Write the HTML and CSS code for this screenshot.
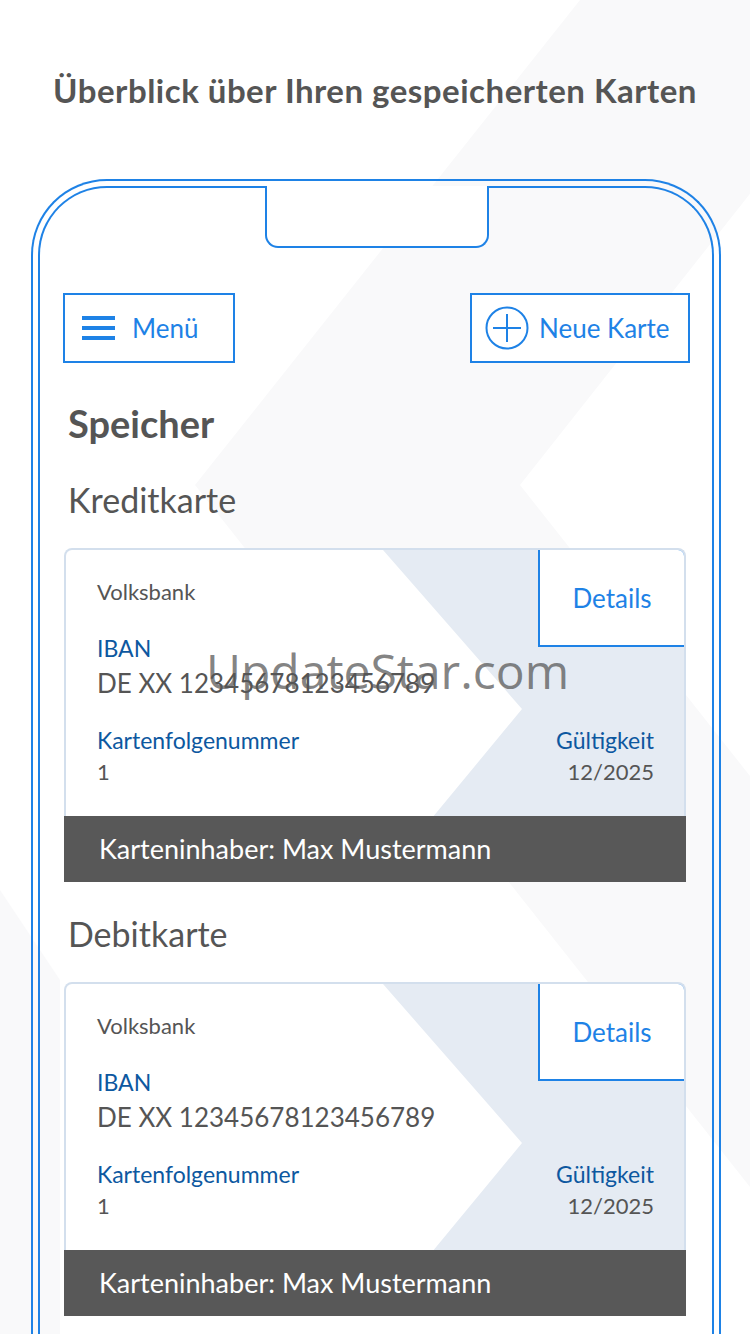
FILE: index.html
```html
<!DOCTYPE html>
<html>
<head>
    <meta name="viewport" content="width=device-width, initial-scale=1.0">
    <link rel="stylesheet" href="styles.css">
</head>
<body>
    <svg class="backdrop" width="750" height="1334" viewBox="0 0 750 1334">
        <polygon points="580,0 903,0 520,485 750,776 750,1187 195,485" fill="#f9f9fa"/>
        <polygon points="0,890 60,980 60,1334 0,1334" fill="#f9f9fa"/>
    </svg>

    <h1 class="title">Überblick über Ihren gespeicherten Karten</h1>

    <div class="phone">
        <div class="screen">
            <div class="notch"></div>

            <div class="toolbar">
                <button class="tool-btn menu-btn">
                    <span class="burger"><i></i><i></i><i></i></span>
                    Menü
                </button>
                <button class="tool-btn add-btn">
                    <svg width="44" height="44" viewBox="0 0 44 44">
                        <circle cx="22" cy="22" r="20.5" fill="none" stroke="#1e82e6" stroke-width="2"/>
                        <path d="M22 8 V36 M8 22 H36" stroke="#1e82e6" stroke-width="2"/>
                    </svg>
                    Neue Karte
                </button>
            </div>

            <h2 class="section-title">Speicher</h2>

            <h3 class="card-type">Kreditkarte</h3>
            <div class="card">
                <div class="card-body">
                    <svg class="card-shape" width="618" height="268" viewBox="0 0 618 268" preserveAspectRatio="none">
                        <polygon points="317,0 618,0 618,268 366,268 456,159" fill="#e5ebf3"/>
                    </svg>
                    <a class="details-btn">Details</a>
                    <div class="bank">Volksbank</div>
                    <div class="label">IBAN</div>
                    <div class="iban">DE XX 12345678123456789</div>
                    <div class="meta">
                        <div>
                            <div class="label">Kartenfolgenummer</div>
                            <div class="value">1</div>
                        </div>
                        <div class="right">
                            <div class="label">Gültigkeit</div>
                            <div class="value">12/2025</div>
                        </div>
                    </div>
                </div>
                <div class="card-footer">Karteninhaber: Max Mustermann</div>
            </div>

            <h3 class="card-type">Debitkarte</h3>
            <div class="card">
                <div class="card-body">
                    <svg class="card-shape" width="618" height="268" viewBox="0 0 618 268" preserveAspectRatio="none">
                        <polygon points="317,0 618,0 618,268 366,268 456,159" fill="#e5ebf3"/>
                    </svg>
                    <a class="details-btn">Details</a>
                    <div class="bank">Volksbank</div>
                    <div class="label">IBAN</div>
                    <div class="iban">DE XX 12345678123456789</div>
                    <div class="meta">
                        <div>
                            <div class="label">Kartenfolgenummer</div>
                            <div class="value">1</div>
                        </div>
                        <div class="right">
                            <div class="label">Gültigkeit</div>
                            <div class="value">12/2025</div>
                        </div>
                    </div>
                </div>
                <div class="card-footer">Karteninhaber: Max Mustermann</div>
            </div>
        </div>
    </div>

    <div class="watermark">UpdateStar.com</div>
</body>
</html>
```

FILE: styles.css
```css
html, body {
    margin: 0;
    height: 1334px;
    overflow: hidden;
}

body {
    position: relative;
    font-family: Lato, "Noto Sans", sans-serif;
    color: #555;
    background: #fff;
}

.backdrop {
    position: absolute;
    top: 0;
    left: 0;
    z-index: -1;
}

.title {
    margin: 0;
    padding-top: 70px;
    font-size: 33px;
    line-height: 40px;
    letter-spacing: 0.5px;
    font-weight: bold;
    text-align: center;
    color: #555;
}

.phone {
    margin: 69px 0 0 31px;
    width: 690px;
    height: 1200px;
    box-sizing: border-box;
    border: 2px solid #1e82e6;
    border-bottom: none;
    border-radius: 76px 76px 0 0;
    padding: 5px 5px 0;
}

.screen {
    position: relative;
    height: 100%;
    box-sizing: border-box;
    border: 2px solid #1e82e6;
    border-bottom: none;
    border-radius: 69px 69px 0 0;
    padding: 105px 24px 0 24px;
}

.notch {
    position: absolute;
    top: -2px;
    left: 225px;
    width: 224px;
    height: 62px;
    box-sizing: border-box;
    background: #fff;
    border: 2px solid #1e82e6;
    border-top: none;
    border-radius: 0 0 13px 13px;
}

.toolbar {
    display: flex;
    justify-content: space-between;
    margin: 0 -2px 0 -1px;
}

.tool-btn {
    display: flex;
    align-items: center;
    height: 70px;
    box-sizing: border-box;
    background: #fff;
    border: 2px solid #1e82e6;
    border-radius: 0;
    color: #1e82e6;
    font-family: Lato, "Noto Sans", sans-serif;
    font-size: 26px;
    padding: 0;
}

.menu-btn {
    width: 172px;
    padding-left: 17px;
}

.add-btn {
    width: 220px;
    padding-left: 13px;
}

.add-btn svg {
    margin-right: 10px;
}

.burger {
    display: flex;
    flex-direction: column;
    gap: 6.5px;
    width: 33px;
    margin-right: 17px;
}

.burger i {
    display: block;
    height: 3.5px;
    background: #1e82e6;
}

.section-title {
    margin: 37px 0 0 4px;
    font-size: 38px;
    line-height: 46px;
    font-weight: bold;
}

.card-type {
    margin: 33px 0 0 4px;
    font-size: 34px;
    line-height: 42px;
    font-weight: normal;
}

.card {
    margin: 27px 2px 0 0;
}

.card + .card-type {
    margin-top: 31px;
}

.card-body {
    position: relative;
    height: 268px;
    box-sizing: border-box;
    border: 2px solid #d3dfed;
    border-bottom: none;
    border-radius: 8px 8px 0 0;
    padding: 26px 30px 0 31px;
    background: #fff;
    overflow: hidden;
}

.card-shape {
    position: absolute;
    top: 0;
    left: 0;
}

.card-body > div {
    position: relative;
}

.details-btn {
    position: absolute;
    top: -2px;
    right: -2px;
    width: 148px;
    height: 99px;
    box-sizing: border-box;
    display: flex;
    align-items: center;
    justify-content: center;
    background: #fff;
    border: 2px solid #1e82e6;
    border-radius: 0 8px 0 0;
    color: #1e82e6;
    font-size: 26px;
    z-index: 1;
}

.bank {
    font-size: 22px;
    line-height: 32px;
    margin-bottom: 24px;
}

.label {
    font-size: 23px;
    line-height: 32px;
    color: #0d58a0;
}

.iban {
    font-size: 26px;
    line-height: 38px;
    margin-bottom: 22px;
}

.value {
    font-size: 22px;
    line-height: 32px;
}

.meta {
    display: flex;
    justify-content: space-between;
}

.meta .right {
    text-align: right;
}

.card-footer {
    height: 66px;
    line-height: 66px;
    background: #585858;
    color: #fff;
    font-size: 27px;
    padding-left: 35px;
}

.watermark {
    position: absolute;
    top: 641px;
    left: 206px;
    font-family: "Open Sans", sans-serif;
    font-size: 48px;
    line-height: 60px;
    color: rgba(85, 85, 85, 0.72);
}
```
